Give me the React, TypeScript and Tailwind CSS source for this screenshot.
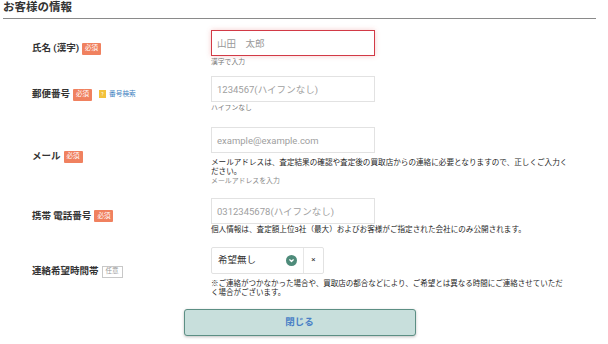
import React from "react";

function Required() {
  return (
    <span className="inline-flex h-[12px] items-center rounded-[1px] bg-[#f0815f] px-[3px] text-[6.5px] leading-none text-white">
      必須
    </span>
  );
}

function Optional() {
  return (
    <span className="inline-flex h-[12px] items-center border border-[#c8c8c8] px-[3px] text-[6.5px] leading-none text-[#999]">
      任意
    </span>
  );
}

function Label({ text, children }: { text: string; children?: React.ReactNode }) {
  return (
    <div className="flex w-[208px] shrink-0 items-center gap-[3px] pl-[29px]">
      <span className="text-[9.5px] font-bold text-[#333]">{text}</span>
      {children}
    </div>
  );
}

function TextInput({ placeholder, error }: { placeholder: string; error?: boolean }) {
  return (
    <input
      readOnly
      placeholder={placeholder}
      className={
        error
          ? "block h-[26px] w-[164px] border border-[#d23a46] bg-white px-[5px] text-[9.5px] outline-none shadow-[0_0_5px_rgba(230,90,90,0.3)] placeholder:text-[#999]"
          : "block h-[26px] w-[164px] border border-[#e2e2e2] bg-white px-[5px] text-[9.5px] outline-none placeholder:text-[#a0a0a0]"
      }
    />
  );
}

function Help({ children }: { children: React.ReactNode }) {
  return <p className="mt-[1px] text-[6.8px] leading-[10px] text-[#777]">{children}</p>;
}

export default function App() {
  return (
    <div className="h-[344px] w-[608px] overflow-hidden bg-white font-['Roboto','Noto_Sans_CJK_JP',sans-serif]">
      <div className="ml-[3px] w-[593px]">
        <h2 className="h-[19px] border-b-[1.5px] border-[#8a8a8a] text-[11.5px] font-bold leading-[15px] text-[#333]">
          お客様の情報
        </h2>

        <div className="mt-[11px] flex items-center">
          <Label text="氏名 (漢字)">
            <Required />
          </Label>
          <div>
            <TextInput placeholder="山田　太郎" error />
            <Help>漢字で入力</Help>
          </div>
        </div>

        <div className="mt-[9px] flex items-center">
          <Label text="郵便番号">
            <Required />
            <span className="ml-[4px] flex items-center gap-[3px]">
              <span className="flex h-[8px] w-[7px] items-center justify-center bg-[#f3c23c] text-[5px] leading-none text-white">
                ?
              </span>
              <span className="text-[6.7px] text-[#3d7fc0]">番号検索</span>
            </span>
          </Label>
          <div>
            <TextInput placeholder="1234567(ハイフンなし)" />
            <Help>ハイフンなし</Help>
          </div>
        </div>

        <div className="mt-[14px] flex items-center">
          <Label text="メール">
            <Required />
          </Label>
          <div>
            <TextInput placeholder="example@example.com" />
            <p className="mt-[6px] w-[362px] text-[7.6px] leading-[8.5px] text-[#1f1f1f]">
              メールアドレスは、査定結果の確認や査定後の買取店からの連絡に必要となりますので、正しくご入力ください。
            </p>
            <p className="text-[6.9px] leading-[10px] text-[#888]">メールアドレスを入力</p>
          </div>
        </div>

        <div className="mt-[12px] flex items-center">
          <Label text="携帯 電話番号">
            <Required />
          </Label>
          <div>
            <TextInput placeholder="0312345678(ハイフンなし)" />
            <p className="mt-[2px] text-[7.6px] leading-[8.5px] text-[#1f1f1f]">
              個人情報は、査定額上位3社（最大）およびお客様がご指定された会社にのみ公開されます。
            </p>
          </div>
        </div>

        <div className="mt-[12px] flex items-center">
          <Label text="連絡希望時間帯">
            <Optional />
          </Label>
          <div>
            <div className="flex h-[27px] w-[113px] items-stretch rounded-[2px] border border-[#e2e2e2] bg-white">
              <div className="flex flex-1 items-center justify-between pl-[6px] pr-[6px]">
                <span className="text-[9.5px] text-[#333]">希望無し</span>
                <span className="flex h-[11px] w-[11px] items-center justify-center rounded-full bg-[#4e8b7a]">
                  <svg width="7" height="7" viewBox="0 0 10 10" fill="none">
                    <path d="M2.5 4l2.5 2.5L7.5 4" stroke="white" strokeWidth="1.8" strokeLinecap="round" strokeLinejoin="round" />
                  </svg>
                </span>
              </div>
              <div className="flex w-[20px] items-center justify-center border-l border-[#e6e6e6] text-[8px] leading-none text-[#333]">
                ×
              </div>
            </div>
            <p className="mt-[5px] w-[356px] text-[7.5px] leading-[9px] text-[#1f1f1f]">
              ※ご連絡がつかなかった場合や、買取店の都合などにより、ご希望とは異なる時間にご連絡させていただく場合がございます。
            </p>
          </div>
        </div>

        <button className="mx-auto mt-[12px] block h-[27px] w-[232px] rounded-[3px] border-[1.5px] border-[#5c8f84] bg-[#c8dfdc] text-[9.5px] font-bold text-[#4a7fc6] shadow-[0_1px_3px_rgba(0,0,0,0.25)]">
          閉じる
        </button>
      </div>
    </div>
  );
}
